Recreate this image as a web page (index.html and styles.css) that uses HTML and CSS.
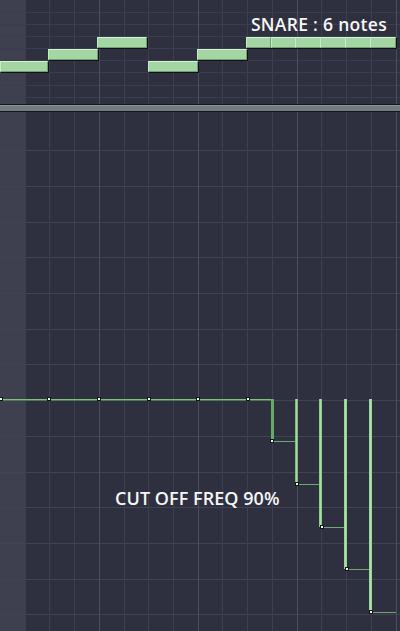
FILE: index.html
```html
<!DOCTYPE html>
<html>
<head>
<meta charset="utf-8">
<link rel="stylesheet" href="styles.css">
</head>
<body>
<div class="roll">
  <section class="panel top">
    <svg class="grid" width="400" height="104" viewBox="0 0 400 104">
      <rect x="0" y="0" width="400" height="104" fill="#2e3040"/>
      <rect x="0" y="0" width="25" height="104" fill="#3e4050"/>
      <g fill="#3b3d4e">
        <rect x="0" y="12" width="400" height="1"/>
        <rect x="0" y="24" width="400" height="1"/>
        <rect x="0" y="36" width="400" height="1"/>
        <rect x="0" y="48" width="400" height="1"/>
        <rect x="0" y="60" width="400" height="1"/>
        <rect x="0" y="72" width="400" height="1"/>
        <rect x="0" y="85" width="400" height="1"/>
        <rect x="0" y="97" width="400" height="1"/>
      </g>
      <g fill="#3d3f50">
        <rect x="25" y="0" width="1" height="104"/>
        <rect x="49" y="0" width="1" height="104"/>
        <rect x="74" y="0" width="1" height="104"/>
        <rect x="124" y="0" width="1" height="104"/>
        <rect x="148" y="0" width="1" height="104"/>
        <rect x="173" y="0" width="1" height="104"/>
        <rect x="222" y="0" width="1" height="104"/>
        <rect x="247" y="0" width="1" height="104"/>
        <rect x="272" y="0" width="1" height="104"/>
        <rect x="321" y="0" width="1" height="104"/>
        <rect x="346" y="0" width="1" height="104"/>
        <rect x="371" y="0" width="1" height="104"/>
      </g>
      <g fill="#4c4e60">
        <rect x="99" y="0" width="1" height="104"/>
        <rect x="198" y="0" width="1" height="104"/>
        <rect x="297" y="0" width="1" height="104"/>
        <rect x="396" y="0" width="1" height="104"/>
      </g>
    </svg>
    <div class="note" style="left:0;top:61px;width:46px"></div>
    <div class="note" style="left:48px;top:49px;width:48px"></div>
    <div class="note" style="left:97px;top:37px;width:48px"></div>
    <div class="note" style="left:148px;top:61px;width:48px"></div>
    <div class="note" style="left:197px;top:49px;width:48px"></div>
    <div class="note" style="left:246px;top:37px;width:23px"></div>
    <div class="note" style="left:271px;top:37px;width:23px"></div>
    <div class="note" style="left:295px;top:37px;width:24px"></div>
    <div class="note" style="left:320px;top:37px;width:24px"></div>
    <div class="note" style="left:345px;top:37px;width:24px"></div>
    <div class="note" style="left:370px;top:37px;width:24px"></div>
    <div class="label snare">SNARE : 6 notes</div>
  </section>
  <div class="sep"></div>
  <section class="panel bottom">
    <svg class="grid" width="400" height="519" viewBox="0 0 400 519">
      <rect x="0" y="0" width="400" height="519" fill="#2e3040"/>
      <rect x="0" y="0" width="25" height="519" fill="#3e4050"/>
      <g fill="#414354">
        <rect x="0" y="38" width="400" height="1"/>
        <rect x="0" y="74" width="400" height="1"/>
        <rect x="0" y="110" width="400" height="1"/>
        <rect x="0" y="145" width="400" height="1"/>
        <rect x="0" y="181" width="400" height="1"/>
        <rect x="0" y="217" width="400" height="1"/>
        <rect x="0" y="252" width="400" height="1"/>
        <rect x="0" y="288" width="400" height="1"/>
        <rect x="0" y="324" width="400" height="1"/>
        <rect x="0" y="360" width="400" height="1"/>
        <rect x="0" y="395" width="400" height="1"/>
        <rect x="0" y="431" width="400" height="1"/>
        <rect x="0" y="467" width="400" height="1"/>
        <rect x="0" y="502" width="400" height="1"/>
      </g>
      <g fill="#3d3f50">
        <rect x="25" y="0" width="1" height="519"/>
        <rect x="49" y="0" width="1" height="519"/>
        <rect x="74" y="0" width="1" height="519"/>
        <rect x="124" y="0" width="1" height="519"/>
        <rect x="148" y="0" width="1" height="519"/>
        <rect x="173" y="0" width="1" height="519"/>
        <rect x="222" y="0" width="1" height="519"/>
        <rect x="247" y="0" width="1" height="519"/>
        <rect x="272" y="0" width="1" height="519"/>
        <rect x="321" y="0" width="1" height="519"/>
        <rect x="346" y="0" width="1" height="519"/>
        <rect x="371" y="0" width="1" height="519"/>
      </g>
      <g fill="#4c4e60">
        <rect x="99" y="0" width="1" height="519"/>
        <rect x="198" y="0" width="1" height="519"/>
        <rect x="297" y="0" width="1" height="519"/>
        <rect x="396" y="0" width="1" height="519"/>
      </g>
      <!-- automation baseline -->
      <rect x="0" y="287" width="273" height="1" fill="#7fbf7f"/>
      <rect x="0" y="288" width="273" height="1" fill="#4a7a4a"/>
      <!-- connectors -->
      <g fill="#6fa86f">
        <rect x="272" y="329" width="24" height="1"/>
        <rect x="297" y="372" width="23" height="1"/>
        <rect x="322" y="415" width="23" height="1"/>
        <rect x="347" y="457" width="23" height="1"/>
        <rect x="372" y="500" width="24" height="1"/>
      </g>
      <!-- bars -->
      <rect x="271" y="287" width="3" height="42" fill="#6aa86a"/>
      <rect x="295" y="287" width="3" height="85" fill="#7cbc7c"/>
      <rect x="319" y="287" width="3" height="128" fill="#8ccb8c"/>
      <rect x="344" y="287" width="3" height="170" fill="#96d496"/>
      <rect x="369" y="287" width="3" height="213" fill="#9ad89a"/>
      <g fill="#b4e6b4" opacity="0.7">
        <rect x="296" y="287" width="1" height="85"/>
        <rect x="320" y="287" width="1" height="128"/>
        <rect x="345" y="287" width="1" height="170"/>
        <rect x="370" y="287" width="1" height="213"/>
      </g>
      <!-- points -->
      <g fill="#eef6ee" stroke="#111318" stroke-width="1">
        <rect x="-0.5" y="285.5" width="3" height="3"/>
        <rect x="47.5" y="285.5" width="3" height="3"/>
        <rect x="97.5" y="285.5" width="3" height="3"/>
        <rect x="147.5" y="285.5" width="3" height="3"/>
        <rect x="196.5" y="285.5" width="3" height="3"/>
        <rect x="246.5" y="285.5" width="3" height="3"/>
        <rect x="270.5" y="327.5" width="3" height="3"/>
        <rect x="295.5" y="370.5" width="3" height="3"/>
        <rect x="320.5" y="413.5" width="3" height="3"/>
        <rect x="345.5" y="455.5" width="3" height="3"/>
        <rect x="369.5" y="498.5" width="3" height="3"/>
      </g>
    </svg>
    <div class="label freq">CUT OFF FREQ 90%</div>
  </section>
</div>
</body>
</html>
```

FILE: styles.css
```css
html, body {
  margin: 0;
  padding: 0;
  background: #2e3040;
  overflow: hidden;
}

.roll {
  width: 400px;
  height: 631px;
  display: flex;
  flex-direction: column;
  font-family: "Open Sans", "DejaVu Sans", sans-serif;
}

.panel {
  position: relative;
  overflow: hidden;
}

.top {
  height: 104px;
  flex: none;
}

.bottom {
  flex: 1;
}

.grid {
  display: block;
}

.sep {
  flex: none;
  height: 6px;
  background: #737d80;
  border-top: 1px solid #16171d;
  border-bottom: 1px solid #16171d;
  box-shadow: inset 0 1px 0 #8a9496;
}

.note {
  position: absolute;
  height: 9px;
  background: #a4d6a4;
  border-top: 1px solid #d4f2d4;
  border-left: 1px solid #c6eac6;
  border-bottom: 1px solid #6f9e6f;
  border-right: 1px solid #6f9e6f;
  box-shadow: 1px 1px 0 #121318;
  box-sizing: content-box;
}

.label {
  position: absolute;
  color: #f6f6f6;
  white-space: nowrap;
  font-weight: 600;
}

.snare {
  top: 12px;
  right: 13px;
  font-size: 17.5px;
  line-height: 24px;
  letter-spacing: 0.3px;
}

.freq {
  left: 115px;
  top: 374px;
  font-size: 18px;
  line-height: 24px;
  letter-spacing: 0.05px;
}
```
